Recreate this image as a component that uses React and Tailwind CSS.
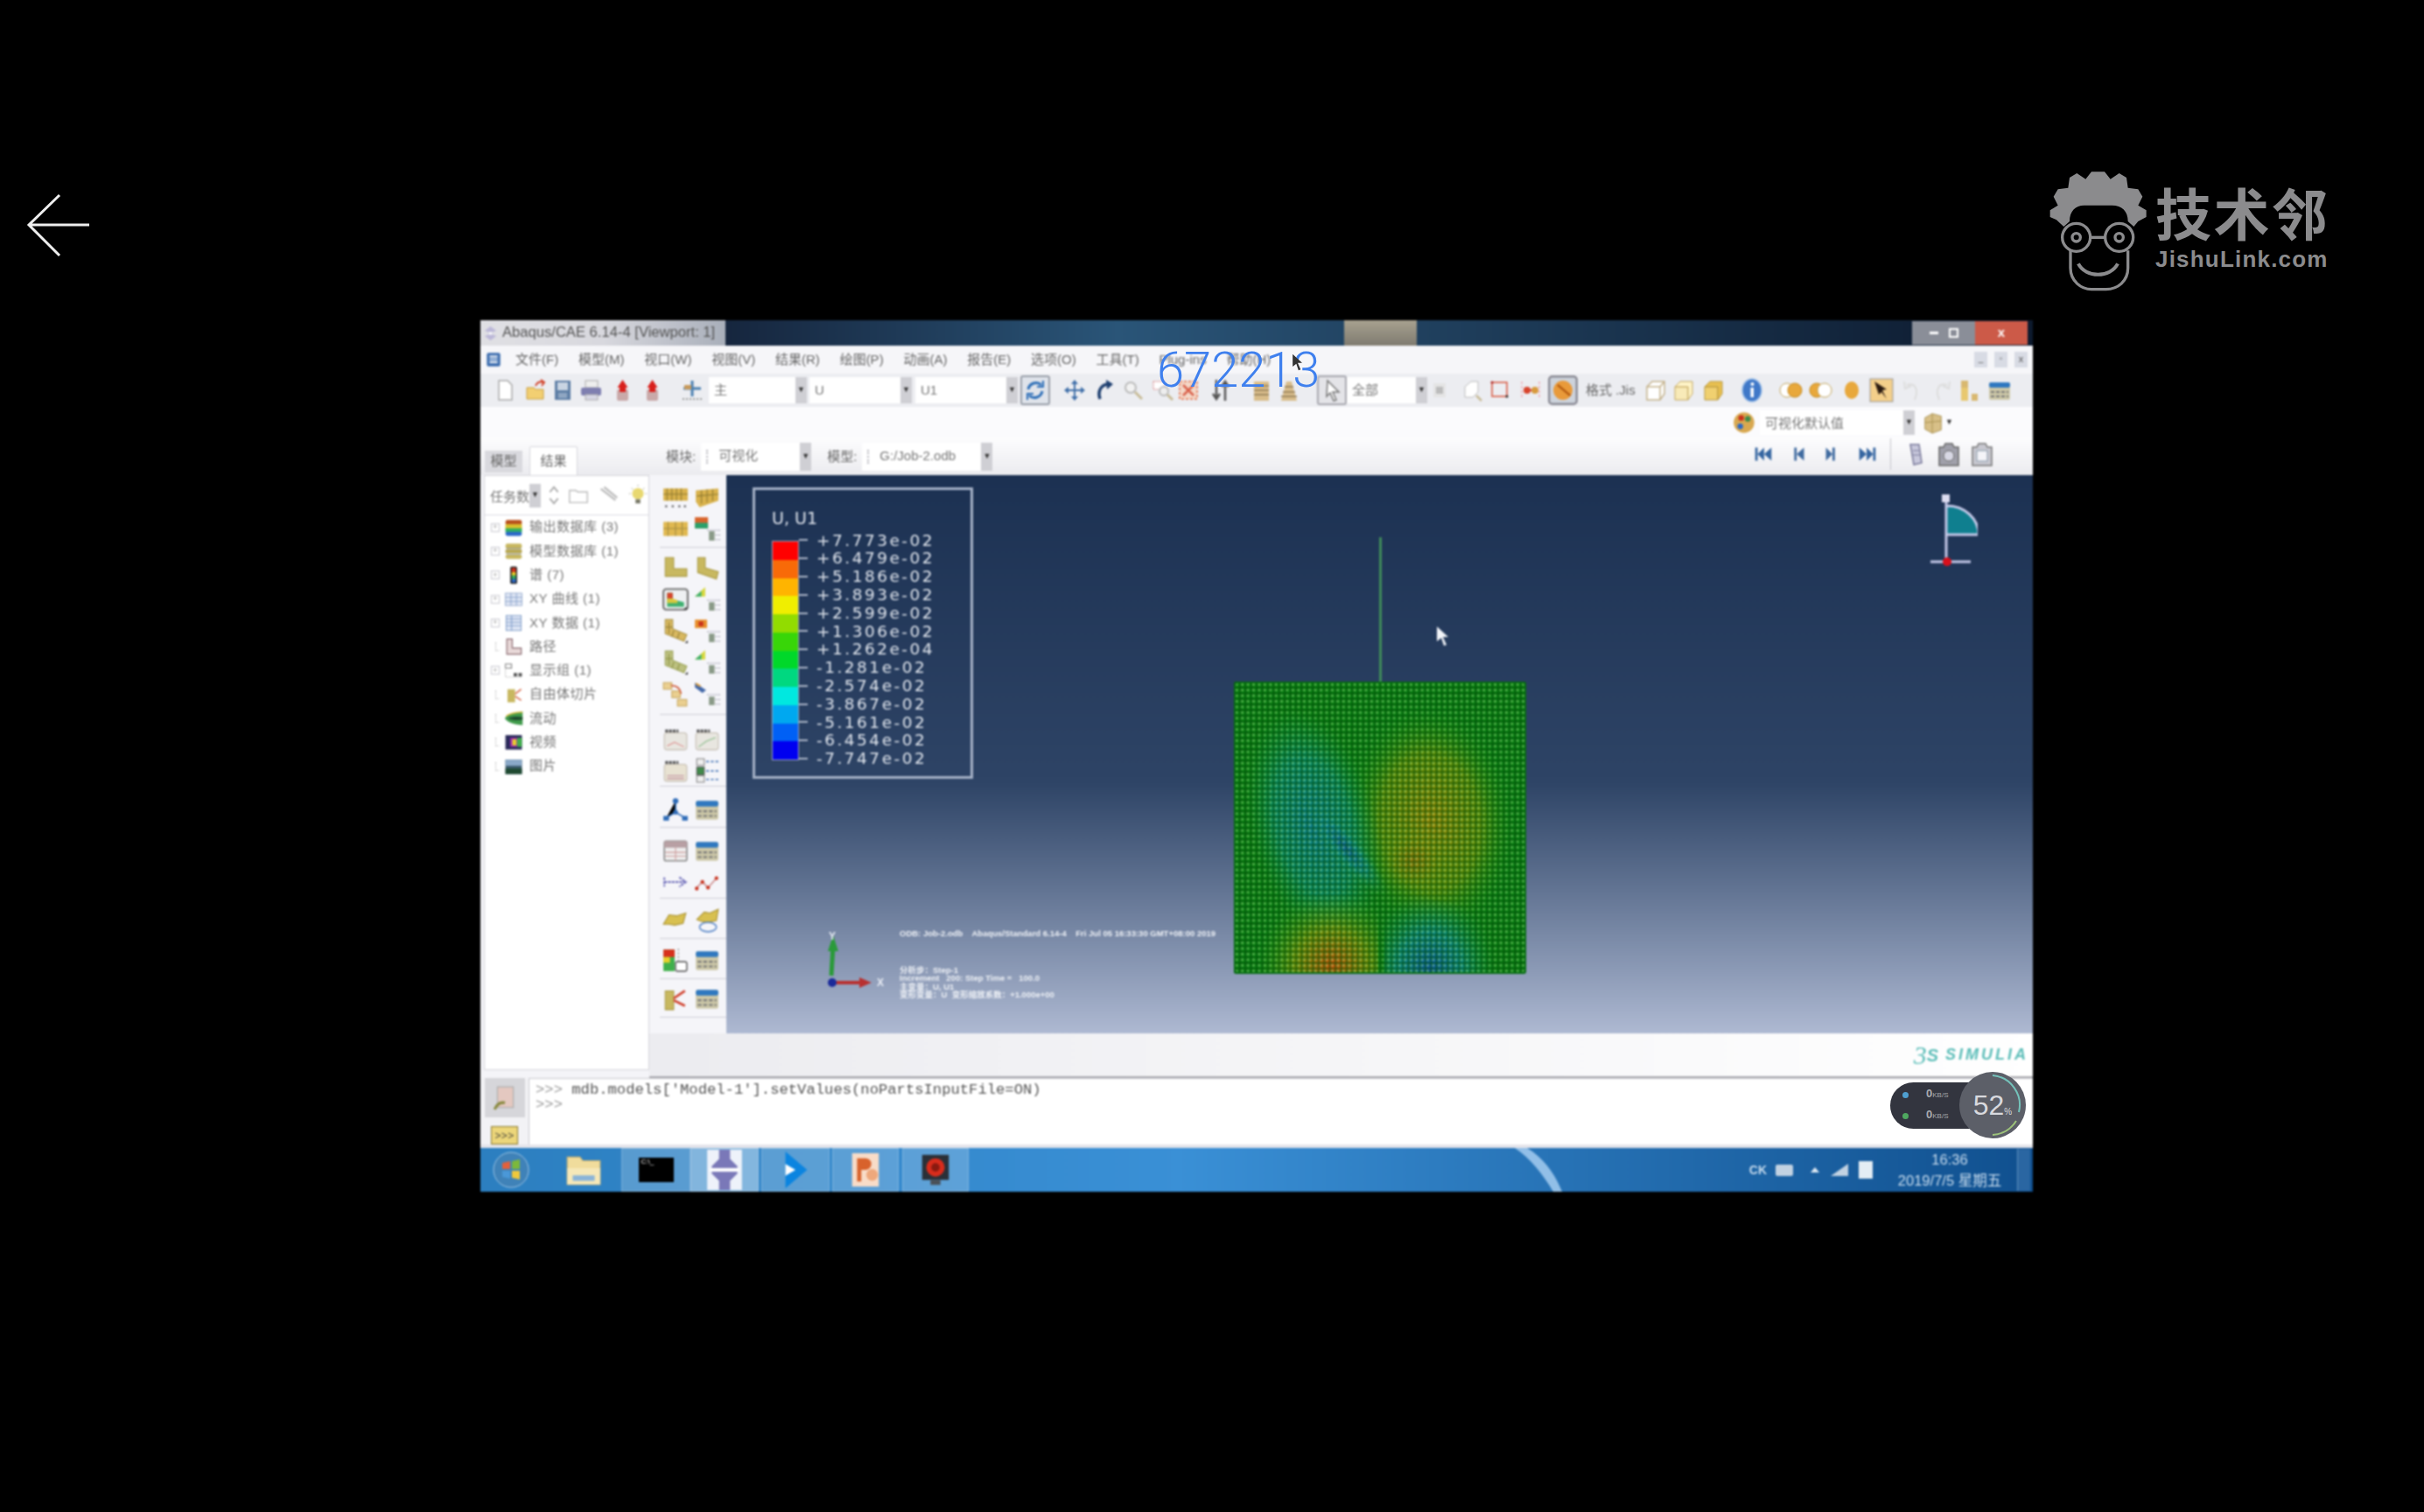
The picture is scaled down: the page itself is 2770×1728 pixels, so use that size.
import React from 'react'

// small drawn icons, 28x28 box
const glyphs = {
  doc: <path d="M7 3h10l5 5v17H7z" fill="#fff" stroke="#aaa" strokeWidth="1.5" />,
  open: <><path d="M4 11h8l2 2h9v11H4z" fill="#f2cf72" stroke="#c9a040" /><path d="M14 9c2-5 6-5 9-4M20 2l4 3-3 4" fill="none" stroke="#d2452c" strokeWidth="2" /></>,
  save: <><rect x="6" y="3" width="18" height="22" fill="#5f7fa6" /><rect x="9" y="5" width="12" height="9" fill="#c9d4e2" /><rect x="10" y="17" width="10" height="6" fill="#8fa6c2" /></>,
  print: <><rect x="8" y="3" width="14" height="8" fill="#eee" stroke="#aaa" /><rect x="3" y="11" width="23" height="9" rx="2" fill="#7f7fb0" /><rect x="8" y="19" width="14" height="6" fill="#d8d8e6" stroke="#aaa" /></>,
  up: <><rect x="8" y="13" width="13" height="13" rx="2" fill="#c9a9a9" /><path d="M14.5 2l6 9h-12z" fill="#d8201c" /><rect x="11" y="10" width="7" height="6" fill="#d8201c" /></>,
  tool: <><path d="M4 12h20M14 3v18" stroke="#4a7fb0" strokeWidth="3" /><path d="M5 8h8v5H5z" fill="#c89a5c" /><path d="M3 24h22" stroke="#999" strokeWidth="2" strokeDasharray="2 2" /></>,
  sync: <><path d="M6 13a9 9 0 0 1 15-5M22 15a9 9 0 0 1-15 5" fill="none" stroke="#2e6fb8" strokeWidth="3" /><path d="M23 3v7h-7M5 25v-7h7" fill="none" stroke="#2e6fb8" strokeWidth="2" /></>,
  move: <path d="M14 2l4 5h-3v6h6v-3l5 4-5 4v-3h-6v6h3l-4 5-4-5h3v-6H7v3l-5-4 5-4v3h6V7h-3z" fill="#3f6ea8" />,
  rotate: <><path d="M9 24c-3-9 1-16 9-17" fill="none" stroke="#1e3f70" strokeWidth="3.5" /><path d="M16 2l8 5-7 6z" fill="#1e3f70" /></>,
  zoom: <><circle cx="11" cy="11" r="6" fill="#f2f2f2" stroke="#bbb" strokeWidth="2" /><path d="M16 16l8 8" stroke="#c8bc98" strokeWidth="3" /></>,
  boxzoom: <><path d="M3 4h13v9H3z" fill="#fff" stroke="#d88" strokeDasharray="2 1" /><circle cx="15" cy="15" r="5" fill="#eee" stroke="#bbb" strokeWidth="2" /><path d="M19 19l6 6" stroke="#c8bc98" strokeWidth="3" /></>,
  fit: <><rect x="4" y="4" width="20" height="20" fill="#f4d8c8" stroke="#e88a6a" strokeDasharray="3 2" strokeWidth="2" /><path d="M8 8l12 12M20 8L8 20" stroke="#d9604a" strokeWidth="2.5" /></>,
  updown: <path d="M9 2v20M5 18l4 6 4-6M19 26V6M15 10l4-6 4 6" fill="none" stroke="#555" strokeWidth="2.5" />,
  ladder: <><path d="M6 4h17v22H6z" fill="#d9bd8b" /><path d="M6 9h17M6 14h17M6 19h17" stroke="#8f7a55" strokeWidth="1.5" /></>,
  tri: <><path d="M11 4h6l6 22H5z" fill="#d9bd8b" /><path d="M9 10h10M7 16h14M5 21h18" stroke="#8f7a55" strokeWidth="1.5" /></>,
  pointer: <path d="M9 3l13 13h-7l4 9-3 1-4-9-4 4z" fill="#fff" stroke="#777" strokeWidth="1.5" />,
  gblock: <><rect x="7" y="6" width="14" height="16" fill="#e4e4e4" /><rect x="10" y="10" width="8" height="8" fill="#bbb" /></>,
  wire: <><path d="M5 10l7-6h8v12l-6 6H5z" fill="#fff" stroke="#bbb" /><path d="M18 20l6 6" stroke="#c8bc98" strokeWidth="2.5" /></>,
  redbox: <><rect x="5" y="5" width="17" height="16" fill="none" stroke="#d8543c" strokeWidth="1.5" /><circle cx="5" cy="5" r="1.5" fill="#a22" /><circle cx="22" cy="21" r="1.5" fill="#222" /></>,
  redarrows: <><path d="M4 4v20M24 4v20" stroke="#e89" strokeDasharray="3 2" /><path d="M9 14h10" stroke="#c33" strokeWidth="2" /><circle cx="10" cy="14" r="4" fill="#d8442c" /><circle cx="19" cy="14" r="4" fill="#d89a3c" /></>,
  hilite: <><rect x="1" y="1" width="26" height="26" rx="3" fill="#cdd3dc" stroke="#8c8c96" strokeWidth="2" /><circle cx="14" cy="14" r="9" fill="#e99a3a" /><path d="M9 9l12 10" stroke="#b45a10" strokeWidth="2" /></>,
  cubeW: <><path d="M4 10h15v15H4zM4 10l6-6h14v14l-5 7M19 10l5-6" fill="#fff" stroke="#c4b28c" strokeWidth="1.5" /></>,
  cubeH: <><path d="M4 10h15v15H4z" fill="#f8eab8" stroke="#c4a860" /><path d="M4 10l6-6h14v14l-5 7V10z" fill="#fff4c8" stroke="#c4a860" /></>,
  cubeS: <><path d="M4 10h15v15H4z" fill="#f0d070" stroke="#b89840" /><path d="M4 10l6-6h14v14l-5 7V10z" fill="#e8c050" stroke="#b89840" /></>,
  info: <><ellipse cx="14" cy="14" rx="11" ry="13" fill="#3f78c8" stroke="#9fc0e8" strokeWidth="1.5" /><rect x="12.5" y="11" width="3.5" height="11" fill="#fff" /><circle cx="14.5" cy="7" r="2" fill="#fff" /></>,
  rings: <><circle cx="9" cy="14" r="8" fill="#fff" stroke="#c4a860" /><circle cx="18" cy="14" r="8" fill="#e8a83c" stroke="#c48a20" /></>,
  rings2: <><circle cx="9" cy="14" r="8" fill="#e8a83c" stroke="#c48a20" /><circle cx="18" cy="14" r="8" fill="#fff" stroke="#c4a860" /></>,
  ball: <ellipse cx="14" cy="14" rx="8" ry="10" fill="#e8a83c" />,
  spark: <><rect x="1" y="1" width="26" height="26" fill="#f4cf8a" stroke="#999" /><path d="M6 4l14 9-5 1 5 10-6-8-3 3z" fill="#2a1a10" /></>,
  undo: <path d="M8 8c9-3 14 4 9 17M5 4l1 8 7-3" fill="none" stroke="#ddd" strokeWidth="2" />,
  redo: <path d="M20 8c-9-3-14 4-9 17M23 4l-1 8-7-3" fill="none" stroke="#ddd" strokeWidth="2" />,
  bars: <><rect x="4" y="3" width="8" height="8" fill="#d8b870" /><rect x="4" y="11" width="8" height="15" fill="#e8c870" /><rect x="16" y="18" width="7" height="8" fill="#d8b870" /></>,
  tableB: <><rect x="2" y="5" width="24" height="20" rx="2" fill="#cdc8a8" /><rect x="2" y="5" width="24" height="6" rx="2" fill="#2f78c0" /><path d="M4 16h20M4 21h20" stroke="#777" strokeWidth="2" strokeDasharray="4 2" /></>,
  tableR: <><rect x="2" y="4" width="24" height="21" rx="2" fill="#eee" stroke="#888" strokeWidth="1.5" /><rect x="2" y="4" width="24" height="7" fill="#b8a0a4" /><path d="M3 16h22M3 20h22M14 11v14" stroke="#c99" /></>,
  tiles: <><rect x="1" y="4" width="26" height="13" fill="#d9b24c" /><path d="M5 4v13M10 4v13M15 4v13M20 4v13M1 10h26" stroke="#8f7a30" /><path d="M3 23h2M10 23h2M17 23h2M23 23h2" stroke="#555" strokeWidth="2" /></>,
  tiles2: <><path d="M2 6l24-2v13l-20 7-4-6z" fill="#d9b24c" /><path d="M8 6v14M14 5v14M20 5v12M3 12l23-2" stroke="#8f7a30" /></>,
  tiles3: <><rect x="1" y="6" width="26" height="15" fill="#e0b850" /><path d="M6 6v15M14 6v15M21 6v15M1 13h26" stroke="#a08a40" /></>,
  rainList: <><rect x="1" y="1" width="14" height="12" fill="#d8642c" /><rect x="1" y="7" width="14" height="6" fill="#2aa06a" /><rect x="16" y="16" width="6" height="10" fill="#8a9a88" /><path d="M14 15h14M23 20h5M23 25h5" stroke="#99a" strokeDasharray="2 1" /></>,
  lTile: <path d="M3 3h9v12h14v8H3z" fill="#c8b860" stroke="#a89840" />,
  lSkew: <path d="M4 3h8v11l14 4-2 8-20-7z" fill="#c8b860" stroke="#a89840" />,
  contour: <><rect x="1" y="3" width="26" height="22" rx="3" fill="#eef0f2" stroke="#777" strokeWidth="2" /><path d="M5 7h6v7l12 3v5H5z" fill="#3fb070" /><path d="M5 7h6v6H5z" fill="#d8442c" /><path d="M5 13h6l5 2v3H5z" fill="#d8c83c" /><path d="M22 25l4-3v3z" fill="#333" /></>,
  greenList: <><path d="M1 11L12 1v10z" fill="#d8d83c" /><path d="M1 11h7V5z" fill="#3fb070" /><rect x="16" y="17" width="6" height="9" fill="#8a9a88" /><path d="M14 15h14M23 20h5M23 25h5" stroke="#99a" strokeDasharray="2 1" /></>,
  orangeList: <><rect x="1" y="2" width="13" height="9" fill="#e8902c" /><rect x="5" y="4" width="5" height="5" fill="#c8301c" /><rect x="16" y="17" width="6" height="9" fill="#8a9a88" /><path d="M14 15h14M23 20h5M23 25h5" stroke="#99a" strokeDasharray="2 1" /></>,
  chain: <><path d="M3 2h8v10l15 6-3 7-20-8z" fill="#d8b860" stroke="#a89040" /><path d="M7 5v12M3 10h8M12 14l-2 6M18 16l-2 6" stroke="#8f7a30" /><path d="M24 27l3-3v3z" fill="#333" /></>,
  chain2: <><path d="M3 2h8v10l15 6-3 7-20-8z" fill="#bcc080" stroke="#98a050" /><path d="M7 5v12M3 10h8M12 14l-2 6M18 16l-2 6" stroke="#8a9040" /><path d="M24 27l3-3v3z" fill="#333" /></>,
  hop: <><rect x="1" y="2" width="9" height="7" fill="#eacf90" stroke="#c8a860" /><rect x="10" y="11" width="9" height="7" fill="#eacf90" stroke="#c8a860" /><rect x="16" y="20" width="10" height="7" fill="#eacf90" stroke="#c8a860" /><path d="M9 5c6 0 10 3 11 9" fill="none" stroke="#d05a3a" strokeWidth="1.5" /></>,
  blueList: <><path d="M1 2l12 8-4 3-8-6z" fill="#4468a8" /><path d="M2 3l5 3" stroke="#d89a3c" strokeWidth="2" /><rect x="16" y="17" width="6" height="9" fill="#8a9a88" /><path d="M14 15h14M23 20h5M23 25h5" stroke="#99a" strokeDasharray="2 1" /></>,
  chartR: <><rect x="2" y="8" width="24" height="18" rx="3" fill="#e8e6e0" stroke="#c4bcb0" /><path d="M5 22l8-4 10 5" stroke="#d88" fill="none" /><path d="M3 6h14" stroke="#555" strokeWidth="3" strokeDasharray="3 1" /></>,
  chartG: <><rect x="2" y="8" width="24" height="18" rx="3" fill="#e8e6e0" stroke="#c4bcb0" /><path d="M5 23l8-6 10-4" stroke="#8b8" fill="none" /><path d="M3 6h14" stroke="#555" strokeWidth="3" strokeDasharray="3 1" /></>,
  chartT: <><rect x="2" y="8" width="24" height="18" rx="3" fill="#e8e2d2" stroke="#c4bcb0" /><path d="M5 20h18M5 23h18" stroke="#b89" fill="none" /><path d="M3 6h14" stroke="#555" strokeWidth="3" strokeDasharray="3 1" /></>,
  dotList: <><rect x="3" y="2" width="8" height="7" fill="#eee" stroke="#888" /><rect x="3" y="11" width="8" height="8" fill="#3f8a4a" stroke="#555" /><rect x="3" y="20" width="8" height="7" fill="#eee" stroke="#888" /><path d="M13 5h14M13 15h14M13 24h14" stroke="#4a78b8" strokeWidth="1.5" strokeDasharray="3 2" /></>,
  nodes: <><path d="M14 5v12L4 23M14 17l10 6" stroke="#2f6cb8" strokeWidth="1.5" /><circle cx="14" cy="5" r="3" fill="#2f6cb8" /><circle cx="14" cy="17" r="2.5" fill="#2f6cb8" /><rect x="1" y="21" width="6" height="5" fill="#2f6cb8" /><rect x="21" y="21" width="6" height="5" fill="#2f6cb8" /></>,
  path: <path d="M2 9v10M2 14h22M18 9l7 5-7 5" fill="none" stroke="#6a68b8" strokeWidth="1.8" strokeDasharray="3 1" />,
  zig: <><path d="M2 21l7-7 6 6 9-10" fill="none" stroke="#c88" strokeWidth="1.5" /><circle cx="3" cy="21" r="2" fill="#c8301c" /><circle cx="9" cy="14" r="2" fill="#c8301c" /><circle cx="15" cy="20" r="2" fill="#c8301c" /><circle cx="24" cy="10" r="2" fill="#c8301c" /></>,
  map: <path d="M1 18l6-10 8 1 10-3-3 11-9 2-6-1z" fill="#d8c050" stroke="#a89030" />,
  mapRing: <><path d="M3 13l8-8 6 1 9-4-2 12-9 2-7-1z" fill="#d8c050" stroke="#a89030" /><ellipse cx="15" cy="21" rx="9" ry="5" fill="none" stroke="#5a88c8" strokeWidth="1.5" /></>,
  rainY: <><rect x="1" y="3" width="12" height="23" fill="#3fb04a" /><rect x="1" y="3" width="12" height="8" fill="#d8301c" /><rect x="1" y="11" width="7" height="6" fill="#e8d02c" /><rect x="14" y="16" width="12" height="10" rx="2" fill="#fff" stroke="#666" strokeWidth="1.5" /><path d="M17 2v14" stroke="#777" strokeDasharray="2 2" /></>,
  kink: <><path d="M3 6h9v20H3z" fill="#c8b860" stroke="#a89840" /><path d="M12 14l12-8M12 16l12 6" stroke="#d0402c" strokeWidth="2.5" /></>,
  flat: <path d="M1 14c8-5 18-5 26 0v4H1z" fill="#a88a3c" />,
  flatB: <rect x="2" y="11" width="24" height="10" rx="3" fill="#2f78c0" />,
  dbRain: <><rect x="2" y="3" width="24" height="7" rx="3" fill="#b8501c" /><rect x="2" y="9" width="24" height="7" fill="#d8c02c" /><rect x="2" y="15" width="24" height="6" fill="#2fb060" /><rect x="2" y="20" width="24" height="6" rx="3" fill="#2a68c8" /></>,
  dbYellow: <><rect x="2" y="3" width="24" height="7" rx="3" fill="#c8b860" /><rect x="2" y="11" width="24" height="6" rx="2" fill="#b8a850" /><rect x="2" y="19" width="24" height="6" rx="3" fill="#c8b860" /><path d="M3 10h22M3 18h22" stroke="#665" /></>,
  legendBar: <><rect x="9" y="2" width="10" height="25" rx="2" fill="#222" /><rect x="11" y="4" width="6" height="6" fill="#d8301c" /><rect x="11" y="10" width="6" height="5" fill="#e8d02c" /><rect x="11" y="15" width="6" height="5" fill="#2fb060" /><rect x="11" y="20" width="6" height="5" fill="#2a68c8" /></>,
  gridB: <><rect x="2" y="5" width="24" height="18" fill="#dfe6f4" stroke="#8aa0c8" /><path d="M2 11h24M2 17h24M10 5v18M18 5v18" stroke="#7a96c4" /></>,
  tableRows: <><rect x="3" y="3" width="22" height="22" fill="#dfe6f4" stroke="#6a8cc0" /><path d="M3 8h22M3 13h22M3 18h22M11 3v22" stroke="#6a8cc0" /></>,
  lOutline: <path d="M4 3h8v13h13v9H4z" fill="#e8d8d8" stroke="#8a6a70" strokeWidth="1.5" />,
  display: <><rect x="2" y="5" width="9" height="6" fill="#fff" stroke="#555" /><path d="M2 5v19h24" fill="none" stroke="#999" strokeDasharray="2 2" /><rect x="14" y="18" width="5" height="5" fill="#555" /><rect x="21" y="18" width="5" height="5" fill="#555" /></>,
  slice: <><rect x="5" y="6" width="11" height="19" fill="#c8b860" /><path d="M16 13l9-7M16 16l9 6" stroke="#d86a4c" strokeWidth="2" /></>,
  flow: <><path d="M1 14C6 6 20 5 27 4v20C20 23 6 22 1 14z" fill="#3f9a4a" /><path d="M6 14c6-3 14-3 21-2v4c-7 1-15 1-21-2z" fill="#1f4a30" /><path d="M3 11c6-5 14-6 24-6" stroke="#d8b83c" strokeWidth="2" fill="none" /></>,
  video: <><rect x="2" y="4" width="24" height="21" fill="#2a2a5a" /><rect x="9" y="8" width="10" height="13" fill="#a82ab8" /><rect x="12" y="10" width="6" height="9" fill="#e8d02c" /><rect x="19" y="8" width="7" height="13" fill="#3fb04a" /></>,
  image: <><rect x="2" y="4" width="24" height="21" fill="#3a5a6a" /><rect x="2" y="4" width="24" height="9" fill="#8aa8c8" /><rect x="2" y="17" width="24" height="8" fill="#1f4a30" /></>,
  rewind: <path d="M4 6h3v16H4zM15 6v16L7 14zM24 6v16l-9-8z" fill="#3565a0" />,
  back: <path d="M9 6h3v16H9zM21 6v16l-9-8z" fill="#3f6a9f" />,
  fwd: <path d="M14 6h3v16h-3zM6 6v16l8-8z" fill="#3f6a9f" />,
  end: <path d="M24 6h-3v16h3zM13 6v16l8-8zM4 6v16l9-8z" fill="#3565a0" />,
  phone: <><path d="M8 3h10l3 21-9 2z" fill="#c8c8dc" stroke="#7a7a9a" strokeWidth="1.5" /><path d="M11 10h7M11 15h8" stroke="#7a7a9a" /></>,
  cam: <><path d="M10 2h8l2 4h5v21H3V6h5z" fill="#a0a0aa" stroke="#666" strokeWidth="1.5" /><circle cx="14" cy="16" r="6" fill="#d8d8e4" stroke="#666" /></>,
  camB: <><path d="M10 2h8l2 4h5v21H3V6h5z" fill="#c8c8d0" stroke="#777" strokeWidth="1.5" /><rect x="8" y="10" width="12" height="12" fill="#f4f4f8" stroke="#89a" /></>,
  palette: <><circle cx="13" cy="14" r="11" fill="#d8a850" /><circle cx="10" cy="9" r="3" fill="#c8301c" /><circle cx="17" cy="10" r="3" fill="#3f8a4a" /><circle cx="9" cy="18" r="3" fill="#2a68c8" /></>,
  boxes: <><path d="M4 8l9-5 11 3v17l-11 4-9-5z" fill="#d8c088" stroke="#a89050" /><path d="M13 3v24M4 14l20-2" stroke="#a89050" /></>,
  appIcon: <><rect x="2" y="2" width="24" height="24" rx="3" fill="#3f6fb0" /><rect x="7" y="7" width="14" height="3" fill="#fff" /><rect x="7" y="12" width="14" height="3" fill="#c8d8ee" /><rect x="7" y="17" width="14" height="3" fill="#fff" /></>,
  windowIcon: <><path d="M14 1l11 8-11 4-11-4z" fill="#bcb8d8" /><path d="M3 19l11-4 11 4-11 8z" fill="#bcb8d8" /><circle cx="14" cy="14" r="3" fill="#fff" /></>,
  updownS: <path d="M9 10l5-6 5 6M9 18l5 6 5-6" fill="none" stroke="#aaa" strokeWidth="2" />,
  folderS: <path d="M3 8h8l2 2h12v13H3z" fill="#fff" stroke="#bbb" strokeWidth="1.5" />,
  link: <path d="M5 6l18 14M9 4l16 13" stroke="#bbb" strokeWidth="2.5" />,
  bulb: <><circle cx="14" cy="12" r="7" fill="#e8d870" /><rect x="11" y="19" width="6" height="5" fill="#776" /><path d="M14 1v2M3 12h2M23 12h2M6 5l2 2M22 5l-2 2" stroke="#aa9" /></>,
  cmdDoc: <><rect x="6" y="2" width="17" height="22" fill="#e4c8c0" stroke="#aaa" /><path d="M3 26c3-7 7-8 11-7" stroke="#8a8a40" strokeWidth="3" fill="none" /></>,
}

function Glyph({ name, className = 'h-[28px] w-[28px]' }) {
  return <svg viewBox="0 0 28 28" className={`shrink-0 ${className}`}>{glyphs[name]}</svg>
}

function Combo({ text, w, h = 'h-[30px]', pad = 'pl-[6px]', handle = false }) {
  return (
    <div className={`relative flex shrink-0 items-stretch bg-white ${w} ${h}`}>
      {handle && <span className="absolute bottom-[8px] left-[6px] top-[8px] w-[2px] border-l-2 border-dotted border-[#b8b8c0]" />}
      <span className={`flex-1 overflow-hidden whitespace-nowrap text-[15px] leading-[30px] text-[#777] ${pad}`}>{text}</span>
      <span className="flex w-[13px] items-center justify-center bg-[#cfcfd4] text-[9px] text-[#333]">▼</span>
    </div>
  )
}

const menu = ['文件(F)', '模型(M)', '视口(W)', '视图(V)', '结果(R)', '绘图(P)', '动画(A)', '报告(E)', '选项(O)', '工具(T)', 'Plug-ins', '帮助(H)']

const toolbarA = [
  ['doc', 'ml-[14px]'], ['open', 'ml-[7px]'], ['save', 'ml-[2px]'], ['print', 'ml-[5px]'], ['up', 'ml-[8px]'], ['up', 'ml-[6px]'], ['tool', 'ml-[18px]'],
]
const toolbarB = [
  ['move', 'ml-[14px]'], ['rotate', 'ml-[6px]'], ['zoom', 'ml-[5px]'], ['boxzoom', 'ml-[6px]'], ['fit', 'ml-[1px]'], ['updown', 'ml-[9px]'], ['ladder', 'ml-[18px]'], ['tri', 'ml-[4px]'],
]
const toolbarC = [
  ['wire', 'ml-[10px]'], ['redbox', 'ml-[3px]'], ['redarrows', 'ml-[7px]'],
]
const toolbarD = [
  ['cubeW', 'ml-[8px]'], ['cubeH', 'ml-[4px]'], ['cubeS', 'ml-[6px]'], ['info', 'ml-[16px]'], ['rings', 'ml-[17px]'], ['rings2', 'ml-[6px]'], ['ball', 'ml-[7px]'], ['spark', 'ml-[6px]'], ['undo', 'ml-[7px]'], ['redo', 'ml-[6px]'], ['bars', 'ml-[4px]'], ['tableB', 'ml-[6px]'],
]

const tree = [
  ['dbRain', '输出数据库 (3)', true], ['dbYellow', '模型数据库 (1)', true], ['legendBar', '谱 (7)', true], ['gridB', 'XY 曲线 (1)', true], ['tableRows', 'XY 数据 (1)', true],
  ['lOutline', '路径', false], ['display', '显示组 (1)', true], ['slice', '自由体切片', false], ['flow', '流动', false], ['video', '视频', false], ['image', '图片', false],
]

const toolGroups = [
  ['pt-[8px] pb-[2px]', ['tiles', 'tiles2', 'tiles3', 'rainList']],
  ['pt-[5px] pb-[5px]', ['lTile', 'lSkew', 'contour', 'greenList', 'chain', 'orangeList', 'chain2', 'greenList', 'hop', 'blueList']],
  ['pt-[9px]', ['chartR', 'chartG', 'chartT', 'dotList']],
  ['pt-[8px] pb-[2px]', ['nodes', 'tableB']],
  ['pt-[8px]', ['tableR', 'tableB', 'path', 'zig']],
  ['pt-[7px] pb-[2px]', ['map', 'mapRing']],
  ['pt-[6px] pb-[3px]', ['rainY', 'tableB']],
  ['pt-[4px] pb-[3px]', ['kink', 'tableB']],
  ['pt-[8px]', ['flat', 'flatB']],
]

const bands = ['bg-[#ff0000]', 'bg-[#f86a08]', 'bg-[#ffb400]', 'bg-[#f0ee00]', 'bg-[#92dc00]', 'bg-[#38d608]', 'bg-[#00d82a]', 'bg-[#00d880]', 'bg-[#00e8e0]', 'bg-[#00a8f0]', 'bg-[#0060f5]', 'bg-[#0000f0]']
const labels = ['+7.773e-02', '+6.479e-02', '+5.186e-02', '+3.893e-02', '+2.599e-02', '+1.306e-02', '+1.262e-04', '-1.281e-02', '-2.574e-02', '-3.867e-02', '-5.161e-02', '-6.454e-02', '-7.747e-02']

function Legend() {
  return (
    <div className="absolute left-[30px] top-[14px] h-[333px] w-[252px] border-[3px] border-[#a5b1c6] pl-[19px] pt-[20px] font-['DejaVu_Sans',sans-serif] text-[#dfe4ec]">
      <div className="text-[19px] leading-[24px]">U, U1</div>
      <div className="mt-[3px] flex">
        <div className="mt-[11px] flex h-[251px] w-[31px] flex-col border border-[#9aa4c0]">
          {bands.map((b) => <div key={b} className={`flex-1 ${b}`} />)}
        </div>
        <div className="flex flex-col">
          {labels.map((l) => (
            <div key={l} className="flex h-[20.8px] items-center">
              <span className="h-[2px] w-[10px] bg-[#aab4c6]" />
              <span className="ml-[10px] whitespace-nowrap text-[18.5px] tracking-[2.5px]">{l}</span>
            </div>
          ))}
        </div>
      </div>
    </div>
  )
}

function Mesh() {
  return (
    <svg viewBox="0 0 334 334" className="absolute left-[580px] top-[236px] h-[334px] w-[334px]">
      <defs>
        <pattern id="cells" width="6.42" height="6.42" patternUnits="userSpaceOnUse">
          <path d="M0 0H6.42M0 0V6.42" stroke="#024f08" strokeWidth="2.4" opacity="0.9" />
          <circle cx="3.2" cy="3.2" r="1.6" fill="#a4e88a" opacity="0.5" />
        </pattern>
        <radialGradient id="yel"><stop offset="0" stopColor="#a88400" stopOpacity="0.95" /><stop offset="0.6" stopColor="#7a9000" stopOpacity="0.75" /><stop offset="1" stopColor="#10900f" stopOpacity="0" /></radialGradient>
        <radialGradient id="teal"><stop offset="0" stopColor="#067a9a" stopOpacity="1" /><stop offset="0.6" stopColor="#068a78" stopOpacity="0.8" /><stop offset="1" stopColor="#0a9040" stopOpacity="0" /></radialGradient>
        <radialGradient id="org"><stop offset="0" stopColor="#c84a00" stopOpacity="1" /><stop offset="0.5" stopColor="#8a9000" stopOpacity="0.8" /><stop offset="1" stopColor="#30a010" stopOpacity="0" /></radialGradient>
        <radialGradient id="blu"><stop offset="0" stopColor="#0650a0" stopOpacity="1" /><stop offset="0.5" stopColor="#08889a" stopOpacity="0.8" /><stop offset="1" stopColor="#0a9040" stopOpacity="0" /></radialGradient>
        <clipPath id="botL"><path d="M0 334V226L165 240V334z" /></clipPath>
        <clipPath id="botR"><path d="M172 334V238L334 270V334z" /></clipPath>
      </defs>
      <rect width="334" height="334" rx="3" fill="#067c10" />
      <ellipse cx="225" cy="160" rx="95" ry="130" fill="url(#yel)" transform="rotate(-6 225 160)" />
      <ellipse cx="205" cy="205" rx="48" ry="45" fill="url(#org)" opacity="0.4" />
      <ellipse cx="92" cy="165" rx="72" ry="135" fill="url(#teal)" transform="rotate(-14 92 165)" />
      <ellipse cx="128" cy="190" rx="18" ry="72" fill="url(#blu)" opacity="0.85" transform="rotate(-40 128 190)" />
      <ellipse cx="112" cy="325" rx="85" ry="85" fill="url(#org)" clipPath="url(#botL)" />
      <ellipse cx="224" cy="330" rx="75" ry="90" fill="url(#blu)" clipPath="url(#botR)" />
      <rect width="334" height="334" rx="3" fill="url(#cells)" />
      <rect x="1" y="1" width="332" height="332" rx="3" fill="none" stroke="#056a10" strokeWidth="2" />
    </svg>
  )
}

function Viewport() {
  return (
    <div className="relative h-[638px] flex-1 overflow-hidden bg-linear-to-b from-[#1c3152] via-[#2e4466] via-55% to-[#aeb9d2]">
      <Legend />
      <span className="absolute left-[746px] top-[71px] h-[166px] w-[3px] bg-[#3f8a5a]" />
      <Mesh />
      {/* mouse pointer */}
      <svg viewBox="0 0 16 24" className="absolute left-[811px] top-[172px] h-[24px] w-[16px]">
        <path d="M1 1l13 12H8l4 9-3 1-3-9-5 4z" fill="#f2f4f8" />
      </svg>
      {/* view triad, top right */}
      <svg viewBox="0 0 70 90" className="absolute left-[1360px] top-[14px] h-[90px] w-[70px]">
        <path d="M35 21a36 33 0 0 1 36 33H35z" fill="#0f7f8f" />
        <path d="M34 12v73M35 54h36M35 21a36 33 0 0 1 36 33M16 85h46" fill="none" stroke="#c4c8e8" strokeWidth="3" />
        <rect x="29" y="8" width="9" height="9" fill="#dcdcf0" />
        <circle cx="35" cy="85" r="5" fill="#d8101c" />
      </svg>
      {/* orientation triad, bottom left */}
      <svg viewBox="0 0 80 70" className="absolute left-[110px] top-[520px] h-[70px] w-[80px]">
        <path d="M10 52l2-34" stroke="#2a9a3a" strokeWidth="5" />
        <path d="M12 6l6 18H6z" fill="#2a9a3a" />
        <path d="M12 60h32" stroke="#b83030" strokeWidth="4" />
        <path d="M56 60l-14 6V54z" fill="#b83030" />
        <circle cx="11" cy="60" r="5" fill="#1a2a9a" />
        <text x="7" y="11" fill="#e8ecf4" fontSize="12" fontWeight="700">Y</text>
        <text x="62" y="64" fill="#e8ecf4" fontSize="12" fontWeight="700">X</text>
      </svg>
      <div className="absolute left-[198px] top-[519px] whitespace-nowrap text-[9.5px] font-bold leading-[10px] text-[#eef1f6]">
        ODB: Job-2.odb &nbsp;&nbsp; Abaqus/Standard 6.14-4 &nbsp;&nbsp; Fri Jul 05 16:33:30 GMT+08:00 2019
      </div>
      <div className="absolute left-[198px] top-[561px] whitespace-nowrap text-[9.5px] font-bold leading-[9.4px] text-[#eef1f6]">
        <div>分析步：Step-1</div>
        <div>Increment &nbsp;&nbsp;200: Step Time = &nbsp;&nbsp;100.0</div>
        <div>主变量：U, U1</div>
        <div>变形变量：U &nbsp;变形缩放系数：+1.000e+00</div>
      </div>
    </div>
  )
}

function TitleBar() {
  return (
    <div className="flex h-[29px] items-stretch">
      <div className="flex w-[280px] items-center bg-linear-to-r from-[#e0e0e4] via-[#d8d8de] to-[#a9afba] pl-[3px]">
        <Glyph name="windowIcon" className="h-[20px] w-[17px]" />
        <span className="ml-[5px] whitespace-nowrap text-[16.6px] text-[#555]">Abaqus/CAE 6.14-4 [Viewport: 1]</span>
      </div>
      <div className="flex flex-1 justify-end bg-linear-to-r from-[#16263e] via-[#2a5578] via-30% to-[#0d1a2e]">
        <div className="mr-[566px] h-full w-[83px] bg-linear-to-b from-[#a8a290] to-[#7f7b70]" />
        <div className="my-[1px] flex w-[72px] items-center justify-center gap-[12px] bg-[#8a8e98] text-[12px] font-bold text-white">
          <span className="h-[3px] w-[10px] bg-white" />
          <span className="h-[11px] w-[11px] border-2 border-white" />
        </div>
        <div className="my-[1px] mr-[6px] flex w-[60px] items-center justify-center bg-[#cc5a48] text-[15px] font-bold text-white">x</div>
      </div>
    </div>
  )
}

function MenuBar() {
  return (
    <div className="flex h-[32px] items-center bg-[#f6f6f9]">
      <Glyph name="appIcon" className="ml-[6px] h-[18px] w-[18px]" />
      <div className="ml-[16px] flex gap-[22.8px] text-[15px] text-[#666]">
        {menu.map((m) => <span key={m} className="whitespace-nowrap">{m}</span>)}
      </div>
      <div className="ml-auto mr-[6px] flex gap-[8px]">
        <span className="h-[18px] w-[15px] bg-[#d8dbe4] text-center text-[10px] text-[#555]">_</span>
        <span className="h-[18px] w-[15px] bg-[#d8dbe4] text-center text-[10px] text-[#555]">▫</span>
        <span className="h-[18px] w-[15px] bg-[#d8dbe4] text-center text-[11px] text-[#555]">x</span>
      </div>
    </div>
  )
}

function Toolbar() {
  const icons = (list) => list.map(([g, m], i) => <div key={g + i} className={m}><Glyph name={g} /></div>)
  return (
    <div className="flex h-[38px] items-center bg-[#ecedf1]">
      {icons(toolbarA)}
      <Combo text="主" w="ml-[5px] w-[112px]" />
      <Combo text="U" w="ml-[3px] w-[117px]" />
      <Combo text="U1" w="ml-[4px] w-[117px]" />
      <div className="ml-[3px] rounded-[3px] border-2 border-[#9aa0aa] bg-[#dfe3ea] p-[1px]"><Glyph name="sync" /></div>
      {icons(toolbarB)}
      <div className="ml-[18px] rounded-[3px] border-2 border-[#a8a8b0] bg-[#e4e4e8] p-[1px]"><Glyph name="pointer" /></div>
      <Combo text="全部" w="w-[92px]" />
      <Glyph name="gblock" />
      {icons(toolbarC)}
      <div className="ml-[6px]"><Glyph name="hilite" className="h-[34px] w-[34px]" /></div>
      <span className="ml-[9px] w-[58px] whitespace-nowrap text-[15px] text-[#666]">格式 .Jis</span>
      {icons(toolbarD)}
    </div>
  )
}

function ToolbarTwo() {
  return (
    <div className="flex h-[35px] items-center justify-end bg-[#fbfbfd] pr-[91px]">
      <Glyph name="palette" className="h-[30px] w-[30px]" />
      <Combo text="可视化默认值" w="ml-[2px] w-[177px]" h="h-[28px]" />
      <Glyph name="boxes" className="ml-[8px] h-[26px] w-[26px]" />
      <span className="ml-[1px] text-[9px] text-[#333]">▼</span>
    </div>
  )
}

function ModuleRow() {
  const play = [['rewind', ''], ['back', 'ml-[12px]'], ['fwd', 'ml-[11px]'], ['end', 'ml-[12px]']]
  return (
    <div className="flex h-[43px] items-end bg-linear-to-b from-[#fdfdfe] to-[#ebebef] text-[15px] text-[#666]">
      <div className="mb-[3px] ml-[5px] flex h-[25px] w-[43px] items-center justify-center bg-[#d9d9de]">模型</div>
      <div className="ml-[8px] flex h-[33px] w-[55px] items-center justify-center rounded-t-[2px] border border-b-0 border-[#d6d6dc] bg-white">结果</div>
      <div className="mb-[5px] ml-[101px] flex items-center self-end">
        <span className="whitespace-nowrap">模块:</span>
        <Combo text="可视化" w="ml-[6px] w-[126px]" h="h-[32px]" pad="pl-[20px]" handle />
        <span className="ml-[18px] whitespace-nowrap">模型:</span>
        <Combo text="G:/Job-2.odb" w="ml-[6px] w-[149px]" h="h-[32px]" pad="pl-[20px]" handle />
      </div>
      <div className="mb-[6px] ml-auto mr-[44px] flex items-center">
        {play.map(([g, m]) => <div key={g} className={m}><Glyph name={g} className="h-[26px] w-[28px]" /></div>)}
        <span className="ml-[12px] h-[36px] w-px bg-[#c4c4ca]" />
        <Glyph name="phone" className="ml-[14px] h-[28px] w-[28px]" />
        <Glyph name="cam" className="ml-[10px] h-[28px] w-[28px]" />
        <Glyph name="camB" className="ml-[10px] h-[28px] w-[28px]" />
      </div>
    </div>
  )
}

function LeftPanel() {
  return (
    <div className="h-[689px] w-[193px] shrink-0 pl-[4px]">
      <div className="h-[680px] w-[189px] border border-[#d4d4da] bg-white text-[15px] text-[#777]">
        <div className="flex h-[45px] items-center border-b border-[#dcdce2] pl-[4px]">
          <Combo text="任务数" w="w-[60px]" h="h-[27px]" pad="pl-[2px]" />
          <Glyph name="updownS" className="ml-[2px] h-[26px] w-[26px]" />
          <Glyph name="folderS" className="ml-[2px] h-[26px] w-[26px]" />
          <Glyph name="link" className="ml-[8px] h-[26px] w-[26px]" />
          <Glyph name="bulb" className="ml-[8px] h-[26px] w-[26px]" />
        </div>
        <div>
          {tree.map(([g, t, plus]) => (
            <div key={t} className="flex h-[27.3px] items-center pl-[7px]">
              {plus
                ? <span className="flex h-[10px] w-[10px] items-center justify-center border border-[#c8c8d0] text-[9px] leading-none text-[#999]">+</span>
                : <span className="ml-[5px] mr-[1px] h-[10px] w-[4px] border-b border-l border-dotted border-[#bbb]" />}
              <Glyph name={g} className="ml-[5px] h-[22px] w-[22px]" />
              <span className="ml-[7px] whitespace-nowrap tracking-[0.5px]">{t}</span>
            </div>
          ))}
        </div>
      </div>
    </div>
  )
}

function ToolColumn() {
  return (
    <div className="h-[638px] w-[88px] shrink-0 overflow-hidden bg-[#f5f5f9] pl-[12px]">
      {toolGroups.map(([pad, icons], i) => (
        <div key={i} className={`grid grid-cols-[32px_32px] auto-rows-[36px] items-center justify-items-center gap-x-[4px] border-b border-[#cfcfd6] pl-[2px] ${pad}`}>
          {icons.map((g, j) => <Glyph key={j} name={g} className="h-[30px] w-[30px]" />)}
        </div>
      ))}
    </div>
  )
}

function CommandArea() {
  return (
    <div className="flex h-[76px] bg-[#f2f2f5]">
      <div className="flex w-[55px] shrink-0 flex-col items-center">
        <div className="flex h-[45px] w-[46px] items-center justify-center bg-[#d6d6da]">
          <Glyph name="cmdDoc" className="h-[34px] w-[30px]" />
        </div>
        <div className="mt-[10px] flex h-[21px] w-[31px] items-center justify-center border border-[#8a7a30] bg-[#ecd67a] font-['Liberation_Serif',serif] text-[13px] font-bold leading-none text-[#333]">&gt;&gt;&gt;</div>
      </div>
      <div className="flex-1 border-l border-t border-[#c8c8ce] bg-white pl-[7px] pt-[4px] font-['Liberation_Mono',monospace] text-[17.2px] leading-[17px] text-[#555]">
        <div><span className="text-[#999]">&gt;&gt;&gt;</span> mdb.models['Model-1'].setValues(noPartsInputFile=ON)</div>
        <div className="text-[#999]">&gt;&gt;&gt;</div>
      </div>
    </div>
  )
}

function TaskButton({ children, w = 'w-[78px]', bg = 'bg-white/20' }) {
  return <div className={`flex h-[50px] shrink-0 items-center justify-center border border-white/20 ${w} ${bg}`}>{children}</div>
}

function Taskbar() {
  return (
    <div className="relative flex h-[54px] items-end border-t-[4px] border-[#e4e4ea] bg-linear-to-r from-[#2c7fc0] via-[#3a90d6] via-45% to-[#10508f]">
      <svg viewBox="0 0 100 50" className="absolute bottom-0 left-[1182px] h-[50px] w-[100px]">
        <path d="M0 0h14c20 12 32 30 40 50H44C32 30 18 12 0 0z" fill="#a4cdf0" opacity="0.85" />
      </svg>
      <div className="relative ml-[13px] flex h-[50px] items-center">
        <svg viewBox="0 0 44 44" className="h-[44px] w-[44px]">
          <circle cx="22" cy="22" r="20" fill="#3f82b8" stroke="#9cc4e4" />
          <path d="M12 14l9-2v9h-9z" fill="#e2603c" />
          <path d="M23 12l9-2v11h-9z" fill="#7cb83c" />
          <path d="M12 23h9v9l-9-2z" fill="#4a98d8" />
          <path d="M23 23h9v10l-9-2z" fill="#eec83c" />
        </svg>
        <svg viewBox="0 0 44 44" className="ml-[38px] h-[46px] w-[46px]">
          <path d="M4 8h14l3 4h19v26H4z" fill="#f0dc9c" stroke="#c8b070" />
          <path d="M4 20h36v18H4z" fill="#f6e8b8" />
          <rect x="10" y="28" width="24" height="6" fill="#8ab4d8" />
        </svg>
        <TaskButton w="ml-[20px] w-[79px]">
          <span className="flex h-[28px] w-[40px] items-start bg-black pl-[3px] text-[8px] leading-[10px] text-white">C:\_</span>
        </TaskButton>
        <TaskButton bg="bg-white/40">
          <svg viewBox="0 0 44 44" className="h-[46px] w-[46px]">
            <rect x="3" y="0" width="38" height="44" fill="#eef2fa" />
            <path d="M16 0h12v10l8 8v8l-8 8v10H16V34l-8-8v-8l8-8z" fill="#7a78b8" />
            <rect x="6" y="20" width="32" height="4" fill="#fff" />
          </svg>
        </TaskButton>
        <TaskButton w="ml-[3px] w-[78px]">
          <svg viewBox="0 0 44 44" className="h-[42px] w-[42px]">
            <path d="M10 0l26 22-26 22z" fill="#0a84e0" />
            <path d="M10 15l12 7-12 7z" fill="#fff" />
          </svg>
        </TaskButton>
        <TaskButton w="ml-[3px] w-[76px]">
          <svg viewBox="0 0 44 44" className="h-[42px] w-[42px]">
            <rect x="6" y="2" width="32" height="40" fill="#f8dcc8" />
            <path d="M12 8h10a7 7 0 0 1 0 14h-5v14h-5z" fill="#d8622c" />
            <circle cx="30" cy="28" r="7" fill="#eea87c" />
          </svg>
        </TaskButton>
        <TaskButton w="ml-[4px] w-[76px]">
          <svg viewBox="0 0 44 44" className="h-[42px] w-[42px]">
            <rect x="6" y="4" width="32" height="30" fill="#2a3038" />
            <circle cx="22" cy="19" r="11" fill="#d82c1c" />
            <circle cx="22" cy="19" r="5" fill="#8a1a10" />
            <rect x="16" y="34" width="12" height="6" fill="#4a5058" />
          </svg>
        </TaskButton>
      </div>
      <div className="relative ml-auto flex h-[50px] items-center text-[#c8dcee]">
        <span className="text-[14px] font-bold">CK</span>
        <span className="ml-[10px] h-[13px] w-[20px] rounded-[2px] bg-[#c2d2e2]" />
        <span className="ml-[20px] h-0 w-0 border-x-[5px] border-b-[6px] border-x-transparent border-b-[#dfeaf4]" />
        <svg viewBox="0 0 20 14" className="ml-[13px] h-[14px] w-[20px]"><path d="M0 14L20 0v14z" fill="#c2d2e2" /></svg>
        <span className="ml-[12px] h-[20px] w-[16px] bg-[#e4edf4]" />
        <div className="ml-[28px] flex w-[120px] flex-col items-center text-[16.5px] leading-[24px]">
          <span>16:36</span>
          <span className="whitespace-nowrap">2019/7/5 星期五</span>
        </div>
        <span className="ml-[17px] mr-[3px] h-[48px] w-[15px] border-l border-[#5f90bc] bg-[#2a66a2]" />
      </div>
    </div>
  )
}

function SpeedWidget() {
  return (
    <div className="absolute left-[1611px] top-[859px] flex h-[76px] w-[170px] items-center">
      <div className="flex h-[53px] w-[116px] flex-col justify-center gap-[8px] rounded-l-[27px] bg-[#33353f] pl-[14px] text-[13px] leading-[14px] text-[#a8a9ae]">
        <div className="flex items-center"><span className="h-[7px] w-[7px] rounded-full bg-[#4f9fd0]" /><span className="ml-[20px] font-bold">0<span className="text-[8px] font-normal">KB/S</span></span></div>
        <div className="flex items-center"><span className="h-[7px] w-[7px] rounded-full bg-[#4fa860]" /><span className="ml-[20px] font-bold">0<span className="text-[8px] font-normal">KB/S</span></span></div>
      </div>
      <div className="relative ml-[-37px] flex h-[76px] w-[76px] items-center justify-center rounded-full bg-[#5c5f68] text-[#d8d9de]">
        <svg viewBox="0 0 76 76" className="absolute inset-0 h-[76px] w-[76px]">
          <path d="M38 4a34 34 0 0 1 30 42" fill="none" stroke="#74c2ba" strokeWidth="2" />
          <path d="M65 56a34 34 0 0 1-27 16" fill="none" stroke="#9cc27a" strokeWidth="2" />
        </svg>
        <span className="text-[32px] leading-none">52</span>
        <span className="mt-[14px] text-[10px]">%</span>
      </div>
    </div>
  )
}

function Logo() {
  return (
    <div className="mr-[111px] mt-[193px] flex items-start font-['Noto_Sans_CJK_SC',sans-serif] text-[#8b8b8d]">
      <svg viewBox="120 70 345 420" className="h-[140px] w-[115px]">
        <path d="M175 268L150 245L128 235V212L155 195L140 165L155 140L190 135L195 100L220 85L250 105L270 80H315L335 105L365 85L390 100L395 135L430 140L445 165L430 195L458 212V235L430 250L415 268L395 250C395 215 375 195 340 195H245C215 195 195 215 195 250Z" fill="currentColor" />
        <g fill="none" stroke="currentColor" strokeWidth="10">
          <circle cx="218" cy="305" r="48" />
          <circle cx="365" cy="305" r="48" />
          <circle cx="218" cy="305" r="14" />
          <circle cx="365" cy="305" r="14" />
          <path d="M265 305H318" />
          <path d="M198 350V410C198 455 235 483 270 483H320C360 483 395 455 395 410V350" />
          <path d="M225 395C250 445 335 445 360 395" strokeWidth="12" />
        </g>
      </svg>
      <div className="ml-[8px] flex w-[196px] flex-col">
        <span className="mt-[11px] whitespace-nowrap text-[64px] font-bold leading-[75px] tracking-[2.5px]">技术邻</span>
        <span className="mt-[2px] whitespace-nowrap font-['Liberation_Sans',sans-serif] text-[26px] font-bold leading-[30px] tracking-[1.2px]">JishuLink.com</span>
      </div>
    </div>
  )
}

export default function App() {
  return (
    <div className="flex h-[1728px] w-[2770px] flex-col overflow-hidden bg-black font-['Liberation_Sans','Noto_Sans_CJK_SC',sans-serif]">
      <header className="flex h-[366px] shrink-0 items-start justify-between">
        <svg viewBox="0 0 76 76" className="ml-[30px] mt-[220px] h-[76px] w-[76px]">
          <path d="M72 37H3M38 3L3 37L38 72" fill="none" stroke="#eeeeee" strokeWidth="3" />
        </svg>
        <Logo />
      </header>

      <main className="relative ml-[549px] h-[996px] w-[1774px]">
        <div className="flex h-full flex-col bg-[#f4f4f8] blur-[0.9px]">
          <TitleBar />
          <MenuBar />
          <Toolbar />
          <ToolbarTwo />
          <ModuleRow />
          <div className="flex h-[689px]">
            <LeftPanel />
            <div className="flex flex-1 flex-col">
              <div className="flex">
                <ToolColumn />
                <Viewport />
              </div>
              <div className="flex h-[51px] items-center justify-end border-b-2 border-[#a8a8ae] bg-linear-to-r from-[#ececf0] to-white pr-[5px] text-[#5bbdb8]">
                <span className="font-['Liberation_Serif',serif] text-[30px] italic leading-none">3</span>
                <span className="mr-[8px] text-[20px] font-bold italic">S</span>
                <span className="text-[18px] font-bold italic tracking-[3px]">SIMULIA</span>
              </div>
            </div>
          </div>
          <CommandArea />
          <Taskbar />
        </div>
        {/* overlays recorded on top of the screen */}
        <span className="absolute left-[773px] top-[24px] font-['Roboto',sans-serif] text-[56px] font-light leading-[66px] text-[#3f80ee]">672213</span>
        <svg viewBox="0 0 16 24" className="absolute left-[927px] top-[38px] h-[20px] w-[14px]">
          <path d="M1 1l13 12H8l4 9-3 1-3-9-5 4z" fill="#333" />
        </svg>
        <SpeedWidget />
      </main>
    </div>
  )
}
